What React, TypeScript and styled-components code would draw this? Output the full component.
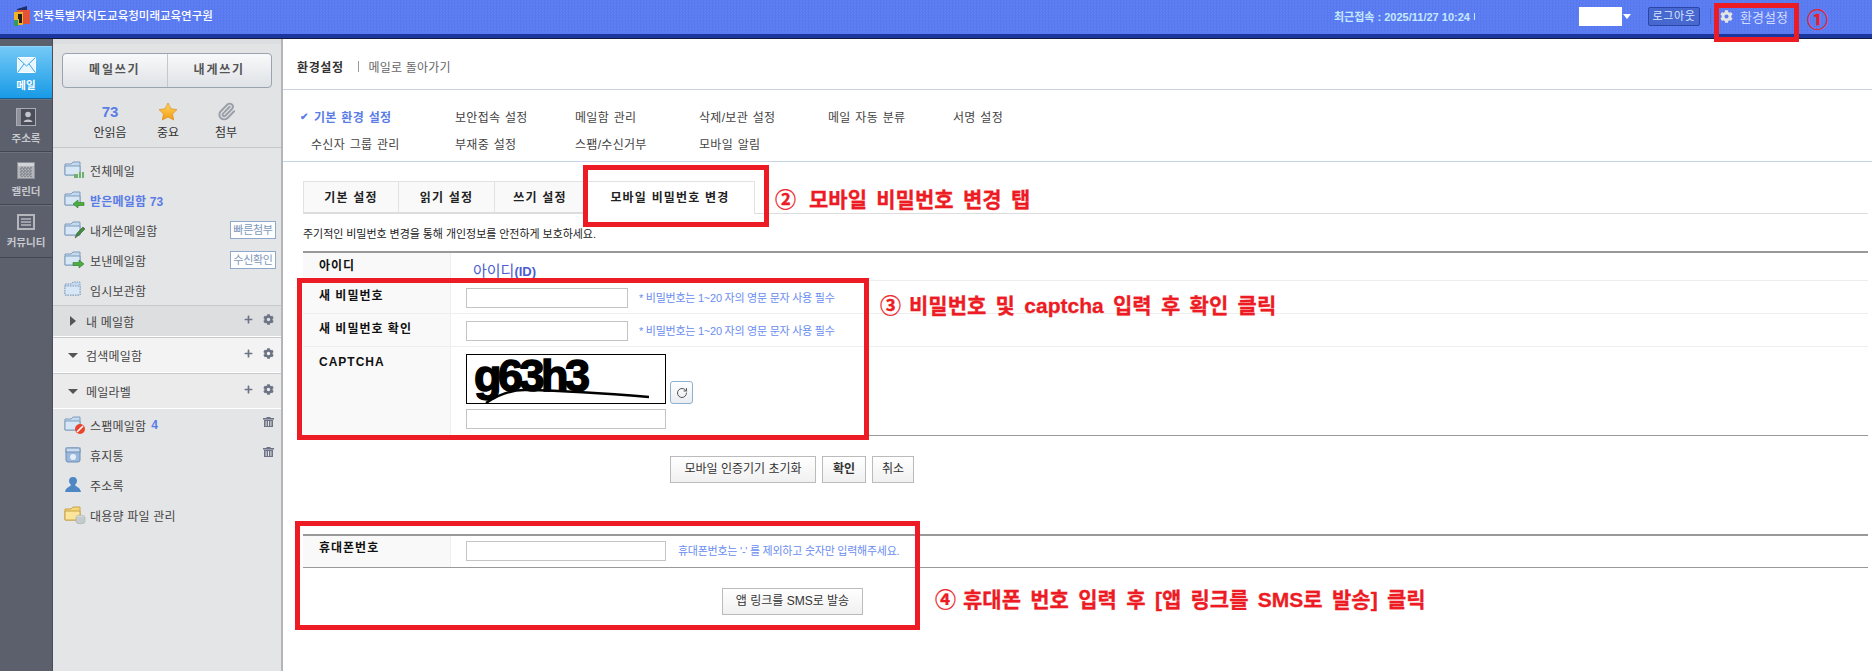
import React from "react";
import styled, { createGlobalStyle } from "styled-components";
import { Paperclip, RotateCw } from "lucide-react";
import { FaCog, FaPlus } from "react-icons/fa";

const GlobalStyle = createGlobalStyle`
    html, body {
        margin: 0;
        padding: 0;
        background: #fff;
    }
    body {
        font-family: "Liberation Sans", "Noto Sans CJK KR", sans-serif;
        font-size: 12px;
        color: #333;
    }
    * {
        box-sizing: border-box;
    }
`;

const Page = styled.div`
    position: relative;
    width: 1872px;
    height: 671px;
    overflow: hidden;
`;

/* header */
const Header = styled.header`
    display: flex;
    align-items: center;
    height: 38px;
    padding: 0 0 3px 13px;
    background-color: #5c7df3;
    background-image: repeating-conic-gradient(#5878ee 0 25%, #5f80f5 0 50%);
    background-size: 3px 3px;
    border-bottom: 3px solid #1c369f;
    box-shadow: inset 0 -1px 0 #1c369f;
    position: relative;
    &::after {
        content: "";
        position: absolute;
        left: 0;
        right: 0;
        bottom: -4px;
        height: 1px;
        background: #141b3d;
    }
`;

const OrgTitle = styled.div`
    margin-left: 2px;
    font-size: 11.5px;
    font-weight: 500;
    color: #fff;
    line-height: 16px;
`;

const LastLogin = styled.div`
    display: flex;
    align-items: center;
    gap: 4px;
    margin-left: auto;
    width: 245px;
    font-size: 11px;
    font-weight: 700;
    color: #c6e8ff;
    white-space: nowrap;
`;

const LoginTick = styled.span`
    width: 1px;
    height: 7px;
    background: #c6e8ff;
`;

const UserBlank = styled.div`
    width: 43px;
    height: 19px;
    background: #fff;
`;

const DownCaret = styled.span`
    margin: 0 17px 0 1px;
    width: 0;
    height: 0;
    border-left: 4px solid transparent;
    border-right: 4px solid transparent;
    border-top: 5px solid #fff;
`;

const LogoutButton = styled.div`
    width: 52px;
    height: 19px;
    border: 1px solid #2b46a8;
    border-radius: 2px;
    background: #4768cf;
    color: #dbe6ff;
    font-size: 11px;
    letter-spacing: 0.6px;
    line-height: 17px;
    text-align: center;
`;

const HeaderDivider = styled.span`
    width: 1px;
    height: 16px;
    margin: 0 9px 0 10px;
    background: #4d6bd8;
`;

const SettingsLink = styled.div`
    display: flex;
    align-items: center;
    gap: 7px;
    width: 152px;
    color: #d3ddff;
    font-size: 13px;
    & svg {
        color: #e4e4e4;
    }
`;

/* body */
const Body = styled.div`
    display: flex;
    height: 633px;
`;

const Rail = styled.nav`
    flex: 0 0 53px;
    padding-top: 8px;
    background: #5c606c;
    border-right: 1px solid #4b4e59;
`;

const RailItem = styled.div<{ $active?: boolean }>`
    display: flex;
    flex-direction: column;
    align-items: center;
    gap: 5px;
    height: 53px;
    padding-top: ${({ $active }) => ($active ? "10px" : "8px")};
    background: ${({ $active }) => ($active ? "linear-gradient(#74c9f7, #189ae6)" : "#5c606c")};
    border-top: 1px solid ${({ $active }) => ($active ? "#8fd5fa" : "#6c707c")};
    border-bottom: 1px solid ${({ $active }) => ($active ? "#0f5f94" : "#43464f")};
    color: ${({ $active }) => ($active ? "#fff" : "#c7c9cf")};
    font-size: 10.5px;
    font-weight: 700;
    line-height: 14px;
`;

const Sidebar = styled.aside`
    flex: 0 0 230px;
    background: #e4e5e7;
    border-right: 2px solid #b3b5b8;
`;

const SideTop = styled.div`
    padding: 15px 9px 0 9px;
    height: 110px;
    background: linear-gradient(#dcdde0 0, #dcdde0 6px, #e2e3e5 6px);
    border-bottom: 1px solid #c6c7c9;
`;

const ComposeGroup = styled.div`
    display: flex;
    width: 210px;
    height: 35px;
    border: 1px solid #9ba4ae;
    border-radius: 4px;
    background: linear-gradient(#f8f9fa, #dfe2e6);
`;

const ComposeButton = styled.div<{ $first?: boolean }>`
    flex: 1;
    text-align: center;
    line-height: 33px;
    font-size: 12px;
    font-weight: 700;
    letter-spacing: 1.8px;
    color: #555;
    border-right: ${({ $first }) => ($first ? "1px solid #c3c8cd" : "none")};
`;

const Stats = styled.div`
    display: grid;
    grid-template-columns: repeat(3, 58px);
    padding: 12px 0 0 19px;
    text-align: center;
`;

const StatTop = styled.div`
    display: flex;
    align-items: center;
    justify-content: center;
    height: 22px;
    font-family: "Liberation Sans", sans-serif;
    font-size: 15px;
    font-weight: 700;
    color: #5a7ce6;
`;

const StatLabel = styled.div`
    margin-top: 3px;
    font-size: 12px;
    line-height: 16px;
    color: #333;
`;

const FolderList = styled.div<{ $pad: number }>`
    padding-top: ${({ $pad }) => $pad}px;
`;

const FolderRow = styled.div<{ $bold?: boolean }>`
    display: flex;
    align-items: center;
    height: 30px;
    padding: 0 5px 0 11px;
    font-size: 12px;
    letter-spacing: 0.2px;
    font-weight: ${({ $bold }) => ($bold ? 700 : 400)};
    color: ${({ $bold }) => ($bold ? "#5a7ce6" : "#444")};
`;

const FolderIconBox = styled.span`
    display: flex;
    flex: 0 0 26px;
`;

const Grow = styled.span`
    flex: 1;
`;

const TinyBadge = styled.span`
    width: 46px;
    height: 18px;
    border: 1px solid #8ea9c9;
    background: #fff;
    color: #7d98b9;
    font-size: 11px;
    line-height: 16px;
    text-align: center;
    letter-spacing: -0.3px;
`;

const Count = styled.span`
    margin-left: 5px;
    color: #5a7ce6;
    font-weight: 700;
`;

const TrashSlot = styled.span`
    display: flex;
    margin: -6px 2px 0 0;
`;

const Section = styled.div<{ $bg: string; $h: number }>`
    display: flex;
    align-items: center;
    height: ${({ $h }) => $h}px;
    padding: 0 7px 0 15px;
    background: ${({ $bg }) => $bg};
    border-top: 1px solid #c8c9cb;
    border-bottom: 1px solid #fff;
    font-size: 12px;
    letter-spacing: 0.2px;
    color: #444;
`;

const SectionArrow = styled.span`
    flex: 0 0 18px;
    display: flex;
`;

const ArrowRight = styled.span`
    margin-left: 2px;
    border-top: 5px solid transparent;
    border-bottom: 5px solid transparent;
    border-left: 6px solid #555;
`;

const ArrowDown = styled.span`
    border-left: 5px solid transparent;
    border-right: 5px solid transparent;
    border-top: 5px solid #555;
`;

const SectionTools = styled.span`
    display: flex;
    align-items: center;
    gap: 10px;
    color: #6c7384;
    margin-top: -3px;
`;

/* main */
const Main = styled.main`
    flex: 1;
    min-width: 0;
`;

const Breadcrumb = styled.div`
    display: flex;
    align-items: center;
    height: 52px;
    padding: 5px 0 0 14px;
    border-bottom: 1px solid #c9d5e2;
`;

const CrumbTitle = styled.b`
    font-size: 12px;
    letter-spacing: 0.6px;
    color: #333;
`;

const CrumbSep = styled.span`
    width: 1px;
    height: 11px;
    margin: 0 10px 0 14px;
    background: #999;
`;

const CrumbLink = styled.span`
    font-size: 12px;
    letter-spacing: 0.2px;
    color: #666;
`;

const SettingsMenu = styled.div`
    display: grid;
    grid-template-columns: 158px 120px 124px 129px 125px auto;
    grid-auto-rows: 27px;
    align-items: center;
    height: 72px;
    padding: 13px 0 0 14px;
    border-bottom: 1px solid #c6d4e4;
    word-spacing: 1px;
`;

const MenuItem = styled.span<{ $active?: boolean; $indent?: boolean }>`
    display: flex;
    align-items: center;
    font-size: 12px;
    letter-spacing: 0.3px;
    padding-left: ${({ $indent }) => ($indent ? "14px" : "0")};
    font-weight: ${({ $active }) => ($active ? 700 : 400)};
    color: ${({ $active }) => ($active ? "#5a7ce6" : "#444")};
`;

const MenuCheck = styled.span`
    flex: 0 0 17px;
    padding-left: 3px;
    font-size: 10px;
`;

const Content = styled.div`
    padding: 19px 4px 0 20px;
`;

const TabBar = styled.div`
    display: flex;
    height: 33px;
    border-bottom: 1px solid #ddd;
`;

const Tab = styled.div<{ $w: number; $active?: boolean }>`
    width: ${({ $w }) => $w}px;
    height: ${({ $active }) => ($active ? "33px" : "32px")};
    border: 1px solid #e2e2e2;
    border-bottom: ${({ $active }) => ($active ? "none" : "1px solid #ddd")};
    background: ${({ $active }) => ($active ? "#fff" : "#f9f9f9")};
    margin-right: -1px;
    font-size: 12px;
    font-weight: 700;
    letter-spacing: 1.2px;
    line-height: 33px;
    text-align: center;
    color: #222;
`;

const Description = styled.p`
    margin: 12px 0 9px;
    font-size: 11px;
    line-height: 16px;
    letter-spacing: -0.05px;
    color: #222;
`;

const FormTable = styled.div`
    border-top: 2px solid #999;
    border-bottom: 1px solid #999;
`;

const Row = styled.div<{ $h: number; $last?: boolean }>`
    display: flex;
    height: ${({ $h }) => $h}px;
    border-bottom: ${({ $last }) => ($last ? "none" : "1px solid #eee")};
`;

const LabelCell = styled.div<{ $pad: number }>`
    flex: 0 0 148px;
    padding: ${({ $pad }) => $pad}px 0 0 16px;
    background: #f9f9f9;
    border-right: 1px solid #eee;
    font-size: 12px;
    font-weight: 700;
    letter-spacing: 1px;
    line-height: 16px;
    color: #111;
`;

const ValueCell = styled.div<{ $pad: number }>`
    display: flex;
    align-items: flex-start;
    padding: ${({ $pad }) => $pad}px 0 0 15px;
`;

const UserId = styled.div`
    color: #4c5dd2;
    font-size: 15px;
    line-height: 20px;
    padding: 8px 0 0 22px;
    & b {
        font-size: 13px;
    }
`;

const TextInput = styled.div<{ $w: number }>`
    width: ${({ $w }) => $w}px;
    height: 20px;
    border: 1px solid #c4c4c4;
    background: #fff;
`;

const Hint = styled.span<{ $gap: number }>`
    margin-left: ${({ $gap }) => $gap}px;
    font-size: 11px;
    line-height: 20px;
    letter-spacing: -0.25px;
    color: #6a8df0;
    white-space: nowrap;
`;

const CaptchaBlock = styled.div`
    display: grid;
    grid-template-columns: 200px auto;
    column-gap: 4px;
    row-gap: 5px;
    align-items: end;
`;

const CaptchaImage = styled.div`
    position: relative;
    width: 200px;
    height: 50px;
    border: 1px solid #000;
    overflow: hidden;
`;

const CaptchaText = styled.span`
    position: absolute;
    left: 7px;
    top: -4px;
    font-family: "Liberation Sans", sans-serif;
    font-size: 45px;
    line-height: 50px;
    font-weight: 700;
    letter-spacing: -3.5px;
    color: #000;
    -webkit-text-stroke: 1.5px #000;
`;

const CaptchaLine = styled.svg`
    position: absolute;
    left: 0;
    top: 0;
`;

const RefreshButton = styled.div`
    display: flex;
    align-items: center;
    justify-content: center;
    width: 23px;
    height: 23px;
    border: 1px solid #90b0d0;
    border-radius: 3px;
    background: linear-gradient(#fff, #e9edf1);
    color: #555;
`;

const ActionBar = styled.div<{ $left: number; $top: number }>`
    display: flex;
    gap: 6px;
    padding: ${({ $top }) => $top}px 0 0 ${({ $left }) => $left}px;
`;

const GrayButton = styled.div<{ $w: number; $bold?: boolean }>`
    width: ${({ $w }) => $w}px;
    height: 27px;
    border: 1px solid #bbb;
    background: linear-gradient(#fff, #f0f0f0);
    font-size: 12px;
    font-weight: ${({ $bold }) => ($bold ? 700 : 400)};
    line-height: 25px;
    text-align: center;
    color: #333;
`;

const SecondTable = styled(FormTable)`
    margin-top: 51px;
`;

/* red marks drawn over the screenshot */
const MarkBox = styled.div<{ $x: number; $y: number; $w: number; $h: number }>`
    position: absolute;
    left: ${({ $x }) => $x}px;
    top: ${({ $y }) => $y}px;
    width: ${({ $w }) => $w}px;
    height: ${({ $h }) => $h}px;
    border: 5px solid #ed1c24;
`;

const MarkNote = styled.div<{ $x: number; $y: number }>`
    position: absolute;
    left: ${({ $x }) => $x}px;
    top: ${({ $y }) => $y}px;
    display: flex;
    align-items: center;
    height: 26px;
    color: #ed1c24;
    font-size: 21px;
    font-weight: 700;
    white-space: nowrap;
    word-spacing: 3.5px;
    -webkit-text-stroke: 0.3px #ed1c24;
`;

const MarkNum = styled.span<{ $gap: number }>`
    margin-right: ${({ $gap }) => $gap}px;
    font-size: 21px;
    font-weight: 700;
`;

const Logo = () => (
    <svg width="18" height="20" viewBox="0 0 18 20">
        <path d="M4 3 L14 0 V4 H4 Z" fill="#1d2f6b" />
        <rect x="4" y="4" width="13" height="14" fill="#e2533a" />
        <rect x="1" y="6" width="9" height="13" fill="#f0b429" />
        <rect x="1" y="14" width="4" height="6" fill="#2f9e5a" />
        <path d="M5 8 H9 V17 H6 V13 H5 Z" fill="#222" />
    </svg>
);

type FolderKind = "all" | "in" | "write" | "sent" | "temp" | "spam" | "big";

const FolderIcon = ({ kind }: { kind: FolderKind }) => {
    const big = kind === "big";
    const dashed = kind === "temp";
    return (
        <svg width="22" height="20" viewBox="0 0 22 20">
            <path
                d="M1 4 H7 L9 2 H16 V15 H1 Z"
                fill={big ? "#f6d778" : "#c4d9ee"}
                stroke={big ? "#c9a24a" : "#7f9dbd"}
                strokeDasharray={dashed ? "1.5 1" : undefined}
            />
            <path d="M1 6 H16 V15 H1 Z" fill={big ? "#fbe59b" : "#d8e7f5"} stroke={big ? "#c9a24a" : "#7f9dbd"} strokeDasharray={dashed ? "1.5 1" : undefined} />
            {kind === "all" && (
                <>
                    <rect x="10" y="12" width="11" height="6" fill="#e4e5e7" />
                    <path d="M11 18 V14 M13 18 V14 M16 18 V12 M19 18 V12" stroke="#3c9a3c" strokeWidth="1.4" />
                </>
            )}
            {kind === "in" && <path d="M9 14 L14 10 V12.5 H20 V15.5 H14 V18 Z" fill="#4cae3f" stroke="#2d7a28" strokeWidth="0.6" />}
            {kind === "sent" && <path d="M20 14 L15 10 V12.5 H9 V15.5 H15 V18 Z" fill="#4cae3f" stroke="#2d7a28" strokeWidth="0.6" />}
            {kind === "write" && <path d="M11 18 L13 13 L19 7 L21 9 L15 15 Z" fill="#3f8f3a" stroke="#3a3a2a" strokeWidth="0.5" />}
            {kind === "spam" && (
                <>
                    <circle cx="16" cy="14" r="5" fill="#e8452f" />
                    <path d="M13 17 L19 11" stroke="#fff" strokeWidth="1.6" />
                </>
            )}
            {big && (
                <>
                    <ellipse cx="16.5" cy="12" rx="4.5" ry="1.8" fill="#d5d9dc" stroke="#9aa" strokeWidth="0.5" />
                    <path d="M12 12 V17 A4.5 1.8 0 0 0 21 17 V12" fill="#c5cacd" stroke="#9aa" strokeWidth="0.5" />
                </>
            )}
        </svg>
    );
};

const BinIcon = () => (
    <svg width="18" height="18" viewBox="0 0 18 18">
        <rect x="2" y="2" width="14" height="14" rx="2" fill="#9ab8dc" stroke="#6f8fb5" />
        <rect x="2" y="2" width="14" height="4" fill="#c9dcf0" stroke="#6f8fb5" />
        <circle cx="9" cy="11" r="3" fill="#e6eef7" />
    </svg>
);

const PersonIcon = () => (
    <svg width="18" height="18" viewBox="0 0 18 18">
        <path d="M9 1 C12 1 13 3 13 5 C13 7 11.5 8 11 9 C12 11 16 11 17 16 H1 C2 11 6 11 7 9 C6.5 8 5 7 5 5 C5 3 6 1 9 1 Z" fill="#4f86c4" />
    </svg>
);

const TrashIcon = () => (
    <svg width="11" height="10" viewBox="0 0 11 10" fill="#6c7384">
        <rect x="0" y="1" width="11" height="1.6" />
        <rect x="3.5" y="0" width="4" height="1.2" />
        <path d="M1 3 H10 V10 H1 Z M2.6 4 V9 H3.6 V4 Z M5 4 V9 H6 V4 Z M7.4 4 V9 H8.4 V4 Z" fillRule="evenodd" />
    </svg>
);

const StarIcon = () => (
    <svg width="20" height="19" viewBox="0 0 20 19">
        <defs>
            <linearGradient id="starFill" x1="0" y1="0" x2="0" y2="1">
                <stop offset="0" stopColor="#ffd75e" />
                <stop offset="1" stopColor="#f59a12" />
            </linearGradient>
        </defs>
        <polygon points="10,1 12.8,6.8 19,7.6 14.5,12 15.7,18 10,15 4.3,18 5.5,12 1,7.6 7.2,6.8" fill="url(#starFill)" stroke="#d98f1c" strokeWidth="0.7" />
    </svg>
);

const RailMail = () => (
    <svg width="19" height="16" viewBox="0 0 19 16">
        <rect x="0.5" y="0.5" width="18" height="15" rx="1" fill="#e8f6ff" stroke="#fff" />
        <path d="M1 1 L9.5 9 L18 1 M1 15 L7 7 M18 15 L12 7" fill="none" stroke="#3aa4e6" />
    </svg>
);

const RailContacts = () => (
    <svg width="20" height="18" viewBox="0 0 20 18">
        <rect x="0.5" y="0.5" width="19" height="17" fill="#4b4e58" stroke="#a9acb3" />
        <rect x="1" y="1" width="4" height="16" fill="#8f929a" />
        <circle cx="12" cy="6.5" r="2.8" fill="#c4c6cb" />
        <path d="M7.5 14 C8 10.5 16 10.5 16.5 14 Z" fill="#c4c6cb" />
    </svg>
);

const RailCalendar = () => (
    <svg width="18" height="18" viewBox="0 0 18 18">
        <rect x="0.5" y="1.5" width="17" height="16" fill="#b4b6bc" stroke="#8d9097" />
        <rect x="1" y="2" width="16" height="3" fill="#d2d3d7" />
        <path d="M3 8 H15 M3 11 H15 M3 14 H15 M5 6 V16 M8 6 V16 M11 6 V16 M14 6 V16" stroke="#5c606c" strokeDasharray="1.5 1.5" />
    </svg>
);

const RailCommunity = () => (
    <svg width="18" height="16" viewBox="0 0 18 16">
        <rect x="1" y="1" width="16" height="14" fill="#5c606c" stroke="#b4b6bc" strokeWidth="2" />
        <path d="M4 5 H14 M4 8 H14 M4 11 H14" stroke="#b4b6bc" strokeWidth="1.3" />
    </svg>
);

const App: React.FC = () => {
    const menuRowOne = ["보안접속 설정", "메일함 관리", "삭제/보관 설정", "메일 자동 분류", "서명 설정"];
    const menuRowTwo = ["부재중 설정", "스팸/수신거부", "모바일 알림"];
    const passwordHint = "* 비밀번호는 1~20 자의 영문 문자 사용 필수";

    return (
        <>
            <GlobalStyle />
            <Page>
                <Header>
                    <Logo />
                    <OrgTitle>전북특별자치도교육청미래교육연구원</OrgTitle>
                    <LastLogin>
                        최근접속 : 2025/11/27 10:24
                        <LoginTick />
                    </LastLogin>
                    <UserBlank />
                    <DownCaret />
                    <LogoutButton>로그아웃</LogoutButton>
                    <HeaderDivider />
                    <SettingsLink>
                        <FaCog size={13} />
                        환경설정
                    </SettingsLink>
                </Header>
                <Body>
                    <Rail>
                        <RailItem $active>
                            <RailMail />
                            메일
                        </RailItem>
                        <RailItem>
                            <RailContacts />
                            주소록
                        </RailItem>
                        <RailItem>
                            <RailCalendar />
                            캘린더
                        </RailItem>
                        <RailItem>
                            <RailCommunity />
                            커뮤니티
                        </RailItem>
                    </Rail>
                    <Sidebar>
                        <SideTop>
                            <ComposeGroup>
                                <ComposeButton $first>메일쓰기</ComposeButton>
                                <ComposeButton>내게쓰기</ComposeButton>
                            </ComposeGroup>
                            <Stats>
                                <div>
                                    <StatTop>73</StatTop>
                                    <StatLabel>안읽음</StatLabel>
                                </div>
                                <div>
                                    <StatTop>
                                        <StarIcon />
                                    </StatTop>
                                    <StatLabel>중요</StatLabel>
                                </div>
                                <div>
                                    <StatTop>
                                        <Paperclip size={19} color="#9a9ea6" strokeWidth={2.4} />
                                    </StatTop>
                                    <StatLabel>첨부</StatLabel>
                                </div>
                            </Stats>
                        </SideTop>
                        <FolderList $pad={7}>
                            <FolderRow>
                                <FolderIconBox><FolderIcon kind="all" /></FolderIconBox>
                                전체메일
                            </FolderRow>
                            <FolderRow $bold>
                                <FolderIconBox><FolderIcon kind="in" /></FolderIconBox>
                                받은메일함 73
                            </FolderRow>
                            <FolderRow>
                                <FolderIconBox><FolderIcon kind="write" /></FolderIconBox>
                                내게쓴메일함
                                <Grow />
                                <TinyBadge>빠른첨부</TinyBadge>
                            </FolderRow>
                            <FolderRow>
                                <FolderIconBox><FolderIcon kind="sent" /></FolderIconBox>
                                보낸메일함
                                <Grow />
                                <TinyBadge>수신확인</TinyBadge>
                            </FolderRow>
                            <FolderRow>
                                <FolderIconBox><FolderIcon kind="temp" /></FolderIconBox>
                                임시보관함
                            </FolderRow>
                        </FolderList>
                        <Section $bg="#dddee0" $h={32}>
                            <SectionArrow><ArrowRight /></SectionArrow>
                            내 메일함
                            <Grow />
                            <SectionTools>
                                <FaPlus size={9} />
                                <FaCog size={11} />
                            </SectionTools>
                        </Section>
                        <Section $bg="#f3f3f3" $h={36}>
                            <SectionArrow><ArrowDown /></SectionArrow>
                            검색메일함
                            <Grow />
                            <SectionTools>
                                <FaPlus size={9} />
                                <FaCog size={11} />
                            </SectionTools>
                        </Section>
                        <Section $bg="#ebebec" $h={36}>
                            <SectionArrow><ArrowDown /></SectionArrow>
                            메일라벨
                            <Grow />
                            <SectionTools>
                                <FaPlus size={9} />
                                <FaCog size={11} />
                            </SectionTools>
                        </Section>
                        <FolderList $pad={1}>
                            <FolderRow>
                                <FolderIconBox><FolderIcon kind="spam" /></FolderIconBox>
                                스팸메일함
                                <Count>4</Count>
                                <Grow />
                                <TrashSlot><TrashIcon /></TrashSlot>
                            </FolderRow>
                            <FolderRow>
                                <FolderIconBox><BinIcon /></FolderIconBox>
                                휴지통
                                <Grow />
                                <TrashSlot><TrashIcon /></TrashSlot>
                            </FolderRow>
                            <FolderRow>
                                <FolderIconBox><PersonIcon /></FolderIconBox>
                                주소록
                            </FolderRow>
                            <FolderRow>
                                <FolderIconBox><FolderIcon kind="big" /></FolderIconBox>
                                대용량 파일 관리
                            </FolderRow>
                        </FolderList>
                    </Sidebar>
                    <Main>
                        <Breadcrumb>
                            <CrumbTitle>환경설정</CrumbTitle>
                            <CrumbSep />
                            <CrumbLink>메일로 돌아가기</CrumbLink>
                        </Breadcrumb>
                        <SettingsMenu>
                            <MenuItem $active>
                                <MenuCheck>✔</MenuCheck>
                                기본 환경 설정
                            </MenuItem>
                            {menuRowOne.map((m) => (
                                <MenuItem key={m}>{m}</MenuItem>
                            ))}
                            <MenuItem $indent>수신자 그룹 관리</MenuItem>
                            {menuRowTwo.map((m) => (
                                <MenuItem key={m}>{m}</MenuItem>
                            ))}
                        </SettingsMenu>
                        <Content>
                            <TabBar>
                                <Tab $w={96}>기본 설정</Tab>
                                <Tab $w={97}>읽기 설정</Tab>
                                <Tab $w={92}>쓰기 설정</Tab>
                                <Tab $w={170} $active>모바일 비밀번호 변경</Tab>
                            </TabBar>
                            <Description>주기적인 비밀번호 변경을 통해 개인정보를 안전하게 보호하세요.</Description>
                            <FormTable>
                                <Row $h={28}>
                                    <LabelCell $pad={5}>아이디</LabelCell>
                                    <UserId>아이디<b>(ID)</b></UserId>
                                </Row>
                                <Row $h={33}>
                                    <LabelCell $pad={7}>새 비밀번호</LabelCell>
                                    <ValueCell $pad={7}>
                                        <TextInput $w={162} />
                                        <Hint $gap={11}>{passwordHint}</Hint>
                                    </ValueCell>
                                </Row>
                                <Row $h={33}>
                                    <LabelCell $pad={7}>새 비밀번호 확인</LabelCell>
                                    <ValueCell $pad={7}>
                                        <TextInput $w={162} />
                                        <Hint $gap={11}>{passwordHint}</Hint>
                                    </ValueCell>
                                </Row>
                                <Row $h={88} $last>
                                    <LabelCell $pad={7}>CAPTCHA</LabelCell>
                                    <ValueCell $pad={7}>
                                        <CaptchaBlock>
                                            <CaptchaImage>
                                                <CaptchaText>g63h3</CaptchaText>
                                                <CaptchaLine width="198" height="48" viewBox="0 0 198 48">
                                                    <path d="M19 48 Q40 34 60 35 Q110 36 182 42" fill="none" stroke="#000" strokeWidth="2.5" />
                                                </CaptchaLine>
                                            </CaptchaImage>
                                            <RefreshButton>
                                                <RotateCw size={12} />
                                            </RefreshButton>
                                            <TextInput $w={200} />
                                        </CaptchaBlock>
                                    </ValueCell>
                                </Row>
                            </FormTable>
                            <ActionBar $left={367} $top={20}>
                                <GrayButton $w={146}>모바일 인증기기 초기화</GrayButton>
                                <GrayButton $w={44} $bold>확인</GrayButton>
                                <GrayButton $w={42}>취소</GrayButton>
                            </ActionBar>
                            <SecondTable>
                                <Row $h={31} $last>
                                    <LabelCell $pad={4}>휴대폰번호</LabelCell>
                                    <ValueCell $pad={5}>
                                        <TextInput $w={200} />
                                        <Hint $gap={12}>휴대폰번호는 '-' 를 제외하고 숫자만 입력해주세요.</Hint>
                                    </ValueCell>
                                </Row>
                            </SecondTable>
                            <ActionBar $left={419} $top={20}>
                                <GrayButton $w={141}>앱 링크를 SMS로 발송</GrayButton>
                            </ActionBar>
                        </Content>
                    </Main>
                </Body>

                <MarkBox $x={1714} $y={3} $w={85} $h={39} />
                <MarkNote $x={1807} $y={5}><MarkNum $gap={0}>①</MarkNum></MarkNote>
                <MarkBox $x={583} $y={165} $w={186} $h={62} />
                <MarkNote $x={775} $y={185}><MarkNum $gap={13}>②</MarkNum>모바일 비밀번호 변경 탭</MarkNote>
                <MarkBox $x={297} $y={278} $w={572} $h={162} />
                <MarkNote $x={880} $y={291}><MarkNum $gap={8}>③</MarkNum>비밀번호 및 captcha 입력 후 확인 클릭</MarkNote>
                <MarkBox $x={295} $y={521} $w={625} $h={109} />
                <MarkNote $x={935} $y={585}><MarkNum $gap={7}>④</MarkNum>휴대폰 번호 입력 후 [앱 링크를 SMS로 발송] 클릭</MarkNote>
            </Page>
        </>
    );
};

export default App;
